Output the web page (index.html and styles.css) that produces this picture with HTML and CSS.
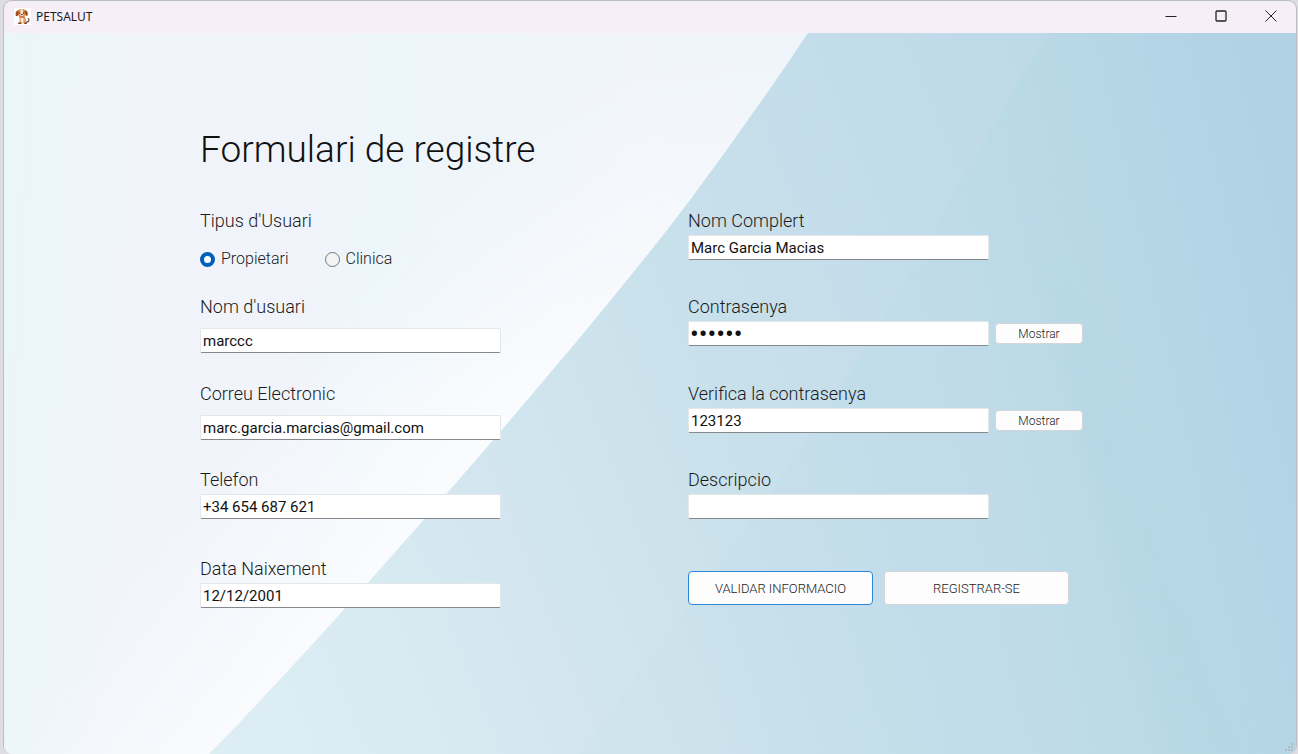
FILE: index.html
```html
<!DOCTYPE html>
<html lang="ca">
<head>
<meta charset="utf-8">
<title>PETSALUT</title>
<link rel="stylesheet" href="styles.css">
</head>
<body>
<div class="window">
  <header class="titlebar">
    <svg class="app-icon" viewBox="0 0 17 17" aria-hidden="true">
      <rect width="17" height="17" fill="#fff"/>
      <path d="M12 14q3.500 0 3-2.200-.2-1.200-1.200-1.300" fill="none" stroke="#5a3a2c" stroke-width="1.100"/>
      <path d="M5.500 8h5l1.500 3 .5 5H10l-1-2-1 2H5.500z" fill="#e0a070"/>
      <path d="M6.800 9.500h2.600v4l-1 1-1.600-1z" fill="#fff1df"/>
      <path d="M4.500 1.800Q7.500 0 10.800 1.800l1 4.500L9.500 9h-4L3.500 6.300z" fill="#dd8b4c"/>
      <path d="M6.900 1.300h1.500l1.600 5L8 8.500 5.500 6.500z" fill="#ffe6c8"/>
      <path d="M4.300 1.700 1.800 4l-.2 3.800 2 .4 1-3zM10.800 1.700l2.700 2.100.4 3.500-2 .7-1.100-3z" fill="#a24a20"/>
      <path d="M5.300 4.500h1.100v1.300H5.300zM9 4.500h1.100v1.300H9zM7 6h1.600v1H7z" fill="#2c1a18"/>
      <path d="M5.500 8.700h5v.9h-5z" fill="#bd3b2b"/>
      <path d="M4.500 14.500h2.500v1.500H4zM10.300 14.500h2.500v1.500h-2.500z" fill="#874020"/>
    </svg>
    <span class="app-name">PETSALUT</span>
    <div class="window-controls">
      <button class="window-button" type="button" aria-label="Minimitza"><svg viewBox="0 0 12 12"><path d="M.5 6.500h11"/></svg></button>
      <button class="window-button" type="button" aria-label="Maximitza"><svg viewBox="0 0 12 12"><rect x="1" y="1" width="10" height="10" rx="1" stroke-width="1.300"/></svg></button>
      <button class="window-button" type="button" aria-label="Tanca"><svg viewBox="0 0 12 12"><path d="M.5.5l11 11M11.500.5l-11 11"/></svg></button>
    </div>
  </header>

  <main class="content">
    <svg class="backdrop" viewBox="0 0 1292 721" preserveAspectRatio="none" aria-hidden="true">
      <defs>
        <linearGradient id="sky" gradientUnits="userSpaceOnUse" x1="250" y1="620" x2="1292" y2="200">
          <stop offset="0" stop-color="#dcedf4"/>
          <stop offset=".25" stop-color="#d3e6ef"/>
          <stop offset=".45" stop-color="#c9e1eb"/>
          <stop offset=".68" stop-color="#c3dcea"/>
          <stop offset="1" stop-color="#b9d6e6"/>
        </linearGradient>
        <linearGradient id="band" gradientUnits="userSpaceOnUse" x1="640" y1="400" x2="1292" y2="250">
          <stop offset="0" stop-color="#c4deea" stop-opacity=".2"/>
          <stop offset=".5" stop-color="#bfdbe9"/>
          <stop offset=".78" stop-color="#b6d7e5"/>
          <stop offset="1" stop-color="#b1d2e5"/>
        </linearGradient>
        <linearGradient id="pale" gradientUnits="userSpaceOnUse" x1="0" y1="200" x2="800" y2="240">
          <stop offset="0" stop-color="#ebf6f9"/>
          <stop offset=".1" stop-color="#eef5fa"/>
          <stop offset=".17" stop-color="#f1f4fa"/>
          <stop offset=".38" stop-color="#f0f4fa"/>
          <stop offset=".46" stop-color="#edf6fa"/>
          <stop offset=".65" stop-color="#eff5fa"/>
          <stop offset=".78" stop-color="#f1f5fa"/>
          <stop offset="1" stop-color="#eff5fa"/>
        </linearGradient>
        <linearGradient id="glow" gradientUnits="userSpaceOnUse" x1="330" y1="250" x2="530" y2="400">
          <stop offset="0" stop-color="#fbfcfe" stop-opacity="0"/>
          <stop offset=".8" stop-color="#fbfcfe" stop-opacity=".85"/>
          <stop offset="1" stop-color="#fbfcfe" stop-opacity=".8"/>
        </linearGradient>
        <linearGradient id="fade" x1="0" y1="0" x2="0" y2="1">
          <stop offset="0" stop-color="#000"/>
          <stop offset=".5" stop-color="#fff"/>
          <stop offset="1" stop-color="#fff"/>
        </linearGradient>
        <mask id="top-fade"><rect width="1292" height="721" fill="url(#fade)"/></mask>
        <linearGradient id="ray" x1="0" y1="0" x2="0" y2="1">
          <stop offset="0" stop-color="#b0d5e1" stop-opacity="0"/>
          <stop offset=".5" stop-color="#b0d5e1" stop-opacity=".35"/>
          <stop offset="1" stop-color="#b0d5e1" stop-opacity=".3"/>
        </linearGradient>
        <filter id="soft"><feGaussianBlur stdDeviation="8"/></filter>
      </defs>
      <rect width="1292" height="721" fill="url(#sky)"/>
      <path d="M1046 0Q975 110 907 237T675 587Q620 660 576 721H1292V0z" fill="url(#band)"/>
      <path d="M990 90Q1060 350 1170 721h65Q1110 360 1010 90z" fill="url(#ray)" filter="url(#soft)"/>
      <path d="M0 0H804Q745 88 683 171C625 247 564 319 501 393S290 635 205 721H0z" fill="url(#pale)"/>
      <path d="M0 0H804Q745 88 683 171C625 247 564 319 501 393S290 635 205 721H0z" fill="url(#glow)" mask="url(#top-fade)"/>
    </svg>

    <form class="form" onsubmit="return false">
      <h1 class="title">Formulari de registre</h1>
      <div class="fields">
        <fieldset class="field user-type">
          <legend class="label">Tipus d'Usuari</legend>
          <div class="options">
            <label class="option"><input class="radio" type="radio" name="tipus" checked>Propietari</label>
            <label class="option"><input class="radio" type="radio" name="tipus">Clinica</label>
          </div>
        </fieldset>
        <div class="field">
          <label class="label" for="nom">Nom Complert</label>
          <input class="input" id="nom" type="text" value="Marc Garcia Macias">
        </div>

        <div class="field field-spaced">
          <label class="label" for="usuari">Nom d'usuari</label>
          <input class="input" id="usuari" type="text" value="marccc">
        </div>
        <div class="field">
          <label class="label" for="contrasenya">Contrasenya</label>
          <div class="input-row">
            <input class="input password" id="contrasenya" type="password" value="123123">
            <button class="button button-small" type="button">Mostrar</button>
          </div>
        </div>

        <div class="field field-spaced">
          <label class="label" for="correu">Correu Electronic</label>
          <input class="input" id="correu" type="text" value="marc.garcia.marcias@gmail.com">
        </div>
        <div class="field">
          <label class="label" for="verifica">Verifica la contrasenya</label>
          <div class="input-row">
            <input class="input" id="verifica" type="text" value="123123">
            <button class="button button-small" type="button">Mostrar</button>
          </div>
        </div>

        <div class="field">
          <label class="label" for="telefon">Telefon</label>
          <input class="input" id="telefon" type="text" value="+34 654 687 621">
        </div>
        <div class="field">
          <label class="label" for="descripcio">Descripcio</label>
          <input class="input" id="descripcio" type="text">
        </div>

        <div class="field">
          <label class="label" for="data">Data Naixement</label>
          <input class="input" id="data" type="text" value="12/12/2001">
        </div>
        <div class="actions">
          <button class="button button-default" type="button">VALIDAR INFORMACIO</button>
          <button class="button" type="submit">REGISTRAR-SE</button>
        </div>
      </div>
    </form>
    <svg class="grip" viewBox="0 0 10 10" aria-hidden="true"><path d="M7 0h2v2H7zM4 3h2v2H4zM7 3h2v2H7zM1 6h2v2H1zM4 6h2v2H4zM7 6h2v2H7z" fill="#b5b9c0"/></svg>
  </main>
</div>
</body>
</html>
```

FILE: styles.css
```css
* {
  box-sizing: border-box;
}

body {
  margin: 0;
  padding: 0 1px 0 3px;
  background: #dfdde4;
  color: #1b1b1b;
  font-family: Roboto, "Liberation Sans", sans-serif;
}

.window {
  display: flex;
  flex-direction: column;
  min-height: 100vh;
  overflow: hidden;
  border: solid #b9bcc4;
  border-width: 1px 1px 0;
  border-radius: 9px;
  background: #f6eff7;
}

.titlebar {
  display: flex;
  align-items: center;
  height: 32px;
  padding: 0 0 2px 10px;
}

.app-icon {
  width: 17px;
  height: 17px;
  margin-right: 5px;
}

.app-name {
  font-family: "Noto Sans", sans-serif;
  font-size: 12px;
}

.window-controls {
  display: flex;
  margin-left: auto;
}

.window-button {
  width: 50px;
  height: 30px;
  padding: 0;
  border: 0;
  background: none;
}

.window-button svg {
  display: block;
  width: 12px;
  height: 12px;
  margin: auto;
  fill: none;
  stroke: #222;
}

.content {
  position: relative;
  flex: 1;
}

.backdrop {
  position: absolute;
  inset: 0;
  width: 100%;
  height: 100%;
}

.grip {
  position: absolute;
  right: 2px;
  bottom: 1px;
  width: 10px;
  height: 10px;
}

.form {
  position: relative;
  padding: 93px 16px 64px 196px;
}

.title {
  margin: 0 0 34px;
  color: #111;
  font-size: 37px;
  font-weight: 300;
  line-height: 48px;
}

.fields {
  display: grid;
  grid-template-columns: minmax(302px, 488px) 1fr;
  grid-template-rows: 86px 87px 86px 89px auto;
}

.field {
  display: flex;
  flex-direction: column;
  align-items: flex-start;
  gap: 1px;
  min-width: 0;
  margin: 0;
  padding: 0;
  border: 0;
}

.field-spaced {
  gap: 8px;
}

.label {
  padding: 0;
  font-size: 18px;
  font-weight: 300;
  line-height: 26px;
}

.options {
  display: flex;
  gap: 36px;
  padding-top: 13px;
}

.option {
  display: flex;
  align-items: center;
  gap: 6px;
  font-size: 16px;
  font-weight: 300;
  line-height: 24px;
}

.radio {
  width: 15px;
  height: 15px;
  margin: 0;
  appearance: none;
  border: 1px solid #777;
  border-radius: 50%;
  background: #f3f3f3;
}

.radio:checked {
  border: 4px solid #005fb8;
  background: #fff;
}

.input {
  width: 301px;
  height: 25px;
  padding: 0 2px;
  border: 1px solid #e4e7ea;
  border-bottom-color: #85888c;
  border-radius: 2px;
  background: #fff;
  color: #111;
  font-family: inherit;
  font-size: 15px;
}

.password {
  padding: 0 1px;
  font-size: 26px;
}

.input-row {
  display: flex;
  align-items: center;
  gap: 6px;
}

.button {
  width: 185px;
  height: 34px;
  padding: 0;
  border: 1px solid #d3d5d9;
  border-radius: 4px;
  background: #fdfdfd;
  color: #1b1b1b;
  font-family: inherit;
  font-size: 13px;
  font-weight: 300;
}

.button-small {
  width: 88px;
  height: 21px;
  font-size: 12px;
}

.button-default {
  border-color: #2b88d8;
}

.actions {
  display: flex;
  gap: 11px;
  padding-top: 15px;
}
```
